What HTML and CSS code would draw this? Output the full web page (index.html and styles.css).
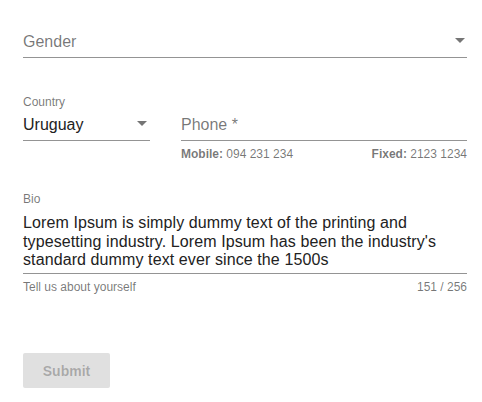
FILE: index.html
```html
<!DOCTYPE html>
<html>
<head>
<meta charset="utf-8">
<link rel="stylesheet" href="styles.css">
</head>
<body>
<form class="form">
  <div class="field gender">
    <div class="select">
      <span class="placeholder">Gender</span>
      <span class="arrow"></span>
    </div>
  </div>

  <div class="row">
    <div class="field country">
      <div class="label">Country</div>
      <div class="select select-value">
        <span class="value">Uruguay</span>
        <span class="arrow"></span>
      </div>
    </div>
    <div class="field phone">
      <div class="input-line">
        <span class="placeholder">Phone *</span>
      </div>
      <div class="hints">
        <span><b>Mobile:</b> 094 231 234</span>
        <span><b>Fixed:</b> 2123 1234</span>
      </div>
    </div>
  </div>

  <div class="field bio">
    <div class="label">Bio</div>
    <div class="textarea">Lorem Ipsum is simply dummy text of the printing and typesetting industry. Lorem Ipsum has been the industry's standard dummy text ever since the 1500s</div>
    <div class="hints plain">
      <span>Tell us about yourself</span>
      <span>151 / 256</span>
    </div>
  </div>

  <button type="button" class="submit" disabled>Submit</button>
</form>
</body>
</html>
```
FILE: styles.css
```css
html, body {
  margin: 0;
  padding: 0;
  background: #fff;
}
body {
  font-family: "Liberation Sans", Arial, sans-serif;
  color: rgba(0, 0, 0, 0.87);
}
.form {
  padding: 33px 15px 0 23px;
  display: flex;
  flex-direction: column;
}
.select, .input-line {
  display: flex;
  align-items: center;
  justify-content: space-between;
  font-size: 16px;
  line-height: 18px;
  padding-bottom: 6px;
  border-bottom: 1px solid rgba(0, 0, 0, 0.42);
}
.placeholder {
  color: rgba(0, 0, 0, 0.54);
}
.arrow {
  width: 0;
  height: 0;
  margin-top: -3px;
  border-left: 5px solid transparent;
  border-right: 5px solid transparent;
  border-top: 5px solid rgba(0, 0, 0, 0.54);
}
.gender .arrow {
  margin-right: 2px;
}
.row {
  display: flex;
  gap: 31px;
  margin-top: 37px;
}
.country {
  width: 127px;
}
.label {
  font-size: 12px;
  line-height: 14px;
  color: rgba(0, 0, 0, 0.54);
}
.select-value {
  margin-top: 7px;
  color: #222;
}
.select-value .arrow {
  margin-right: 3px;
}
.phone {
  flex: 1;
  padding-top: 21px;
}
.hints {
  display: flex;
  justify-content: space-between;
  font-size: 12px;
  line-height: 14px;
  margin-top: 6px;
  color: rgba(0, 0, 0, 0.54);
}
.hints b {
  font-weight: bold;
}
.bio {
  margin-top: 31px;
}
.textarea {
  margin-top: 8px;
  font-size: 16px;
  line-height: 18.5px;
  letter-spacing: 0.1px;
  padding-bottom: 3.5px;
  border-bottom: 1px solid rgba(0, 0, 0, 0.42);
  color: #222;
}
.hints.plain {
  margin-top: 6px;
}
.submit {
  align-self: flex-start;
  margin-top: 59px;
  width: 87px;
  height: 35px;
  border: none;
  border-radius: 2px;
  background: #e0e0e0;
  color: rgba(0, 0, 0, 0.26);
  font-family: "Liberation Sans", Arial, sans-serif;
  font-size: 14px;
  font-weight: bold;
  padding: 0;
}
```
